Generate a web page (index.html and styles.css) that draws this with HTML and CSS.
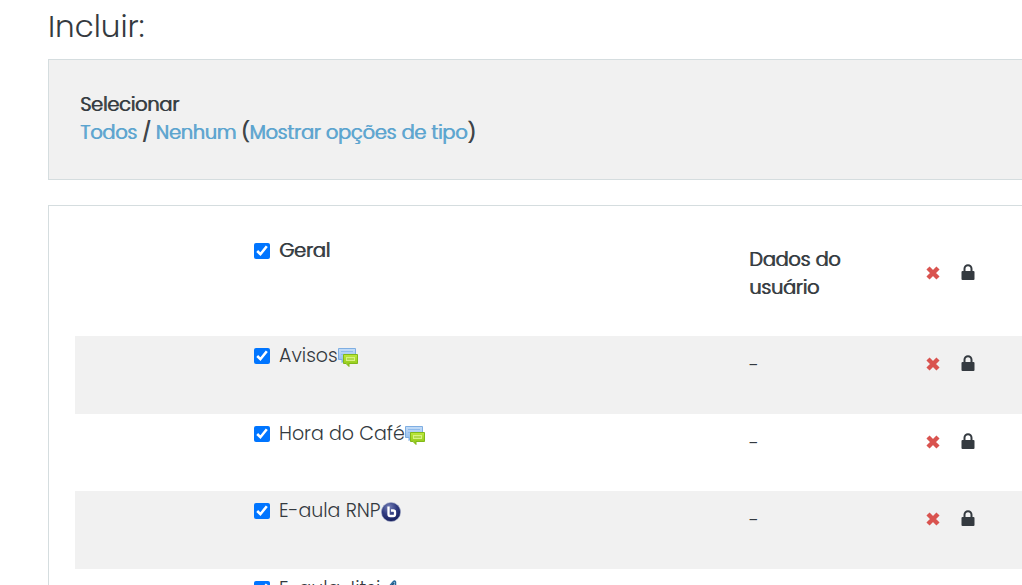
FILE: index.html
```html
<!DOCTYPE html>
<html lang="pt-BR">
<head>
<meta charset="utf-8">
<meta name="viewport" content="width=device-width, initial-scale=1">
<title>Incluir</title>
<link rel="stylesheet" href="styles.css">
</head>
<body>
<svg class="sprite" aria-hidden="true">
  <defs>
    <linearGradient id="blue" x2="0" y2="1"><stop stop-color="#c4ddf8"/><stop offset="1" stop-color="#8db9ea"/></linearGradient>
    <linearGradient id="green" x2="0" y2="1"><stop stop-color="#bce83c"/><stop offset="1" stop-color="#8bc414"/></linearGradient>
    <radialGradient id="navy" cx=".4" cy=".25" r=".8"><stop stop-color="#7580b8"/><stop offset=".5" stop-color="#303b80"/><stop offset="1" stop-color="#141c58"/></radialGradient>
    <symbol id="forum" viewBox="0 0 20 20">
      <path d="M.5 1.500h17v11H7l-3 3v-3H.5z" fill="url(#blue)" stroke="#7faee2"/>
      <path d="M3 4.500h12M3 7.500h4" stroke="#8fbbec" stroke-width="1.200"/>
      <path d="M5.500 7.500h14v9H11v3l-3-3H5.500z" fill="url(#green)" stroke="#82b918"/>
      <path d="M8 10h9v4H8z" fill="#d8f283"/><path d="M9 12h7" stroke="#98c92c" stroke-width="1.200"/>
    </symbol>
    <symbol id="bbb" viewBox="0 0 20 20">
      <circle cx="10" cy="10" r="9.600" fill="url(#navy)" stroke="#a5acc9" stroke-width=".6"/>
      <path d="M7.500 4.500v7.800q0 1.700 1.700 1.700h3.100q1.700 0 1.700-1.700v-2.100q0-1.700-1.700-1.700H10" fill="none" stroke="#fff" stroke-width="2.300"/>
    </symbol>
    <symbol id="jitsi" viewBox="0 0 20 20">
      <path d="M8 8 13 2q2-2 2.500 0v7l-5 8-7-2z" fill="#b9d9ee" stroke="#286a9d" stroke-width="1.500"/>
      <path d="m9 9 5-6" stroke="#174f7c" stroke-width="1.500"/>
    </symbol>
    <symbol id="cross" viewBox="0 0 14 14">
      <path d="m2 2 10 10m0-10L2 12" stroke="#d9534f" stroke-width="4.400"/>
    </symbol>
    <symbol id="lock" viewBox="0 0 14 16">
      <path d="M3.500 8V4.700a3.500 3.500 0 0 1 7 0V8" fill="none" stroke="#343a40" stroke-width="2"/>
      <rect x=".5" y="7" width="13" height="9" rx="1" fill="#343a40"/>
    </symbol>
  </defs>
</svg>
<main class="page">
  <h2 class="title">Incluir:</h2>
  <section class="select-panel">
    <div>Selecionar</div>
    <div><a href="#">Todos</a> / <a href="#">Nenhum</a> (<a href="#">Mostrar opções de tipo</a>)</div>
  </section>
  <section class="items">
    <div class="row heading">
      <label class="name"><input type="checkbox" checked>Geral</label>
      <div class="data">Dados do usuário</div>
      <div class="status"><svg class="cross"><use href="#cross"/></svg><svg class="lock"><use href="#lock"/></svg></div>
    </div>
    <div class="row shaded">
      <label class="name"><input type="checkbox" checked>Avisos<svg class="icon"><use href="#forum"/></svg></label>
      <div class="data">-</div>
      <div class="status"><svg class="cross"><use href="#cross"/></svg><svg class="lock"><use href="#lock"/></svg></div>
    </div>
    <div class="row">
      <label class="name"><input type="checkbox" checked>Hora do Café<svg class="icon"><use href="#forum"/></svg></label>
      <div class="data">-</div>
      <div class="status"><svg class="cross"><use href="#cross"/></svg><svg class="lock"><use href="#lock"/></svg></div>
    </div>
    <div class="row shaded">
      <label class="name"><input type="checkbox" checked>E-aula RNP<svg class="icon"><use href="#bbb"/></svg></label>
      <div class="data">-</div>
      <div class="status"><svg class="cross"><use href="#cross"/></svg><svg class="lock"><use href="#lock"/></svg></div>
    </div>
    <div class="row">
      <label class="name"><input type="checkbox" checked>E-aula Jitsi<svg class="icon"><use href="#jitsi"/></svg></label>
      <div class="data">-</div>
      <div class="status"><svg class="cross"><use href="#cross"/></svg><svg class="lock"><use href="#lock"/></svg></div>
    </div>
  </section>
</main>
</body>
</html>
```
FILE: styles.css
```css
* { box-sizing: border-box; }
body {
  margin: 0;
  height: 100vh;
  overflow: hidden;
  background: #fff;
  color: #343a40;
  font: 300 19px/28px Poppins, Inter, "Open Sans", sans-serif;
}
.sprite { position: absolute; width: 0; height: 0; }
.page { padding: 8px 0 0 48px; }
.title { margin: 0 0 15px; font-size: 31px; line-height: 36px; font-weight: 300; }
.select-panel {
  padding: 31px 31px 32px;
  border: 1px solid #d5dddf;
  border-right: 0;
  background: #f1f1f1;
  text-shadow: 1px 0 currentColor;
}
.select-panel a { color: #5ba4cf; text-decoration: none; }
.items {
  margin-top: 25px;
  padding: 26px 0 0 26px;
  border: 1px solid #d5dddf;
  border-right: 0;
}
.row {
  display: grid;
  grid-template-columns: 1fr 177px 96px;
  min-height: 77px;
  padding-left: 179px;
}
.shaded { min-height: 78px; background: #f1f1f1; }
.name { display: flex; align-items: center; height: 28px; margin-top: 6px; }
.name input { width: 16px; height: 16px; margin: 0 9px 0 0; accent-color: #0075ff; }
.icon { width: 20px; height: 20px; margin-top: 2px; }
.data { padding: 16px 80px 0 0; }
.status { display: flex; align-items: center; gap: 21px; height: 28px; margin-top: 14px; }
.cross { width: 14px; height: 14px; }
.lock { width: 14px; height: 16px; margin-top: -2px; }
.heading { min-height: 104px; text-shadow: 1px 0 currentColor; }
.heading .name { margin-top: 5px; }
.heading .data { padding-top: 14px; }
.heading .status { margin-top: 27px; }
```
